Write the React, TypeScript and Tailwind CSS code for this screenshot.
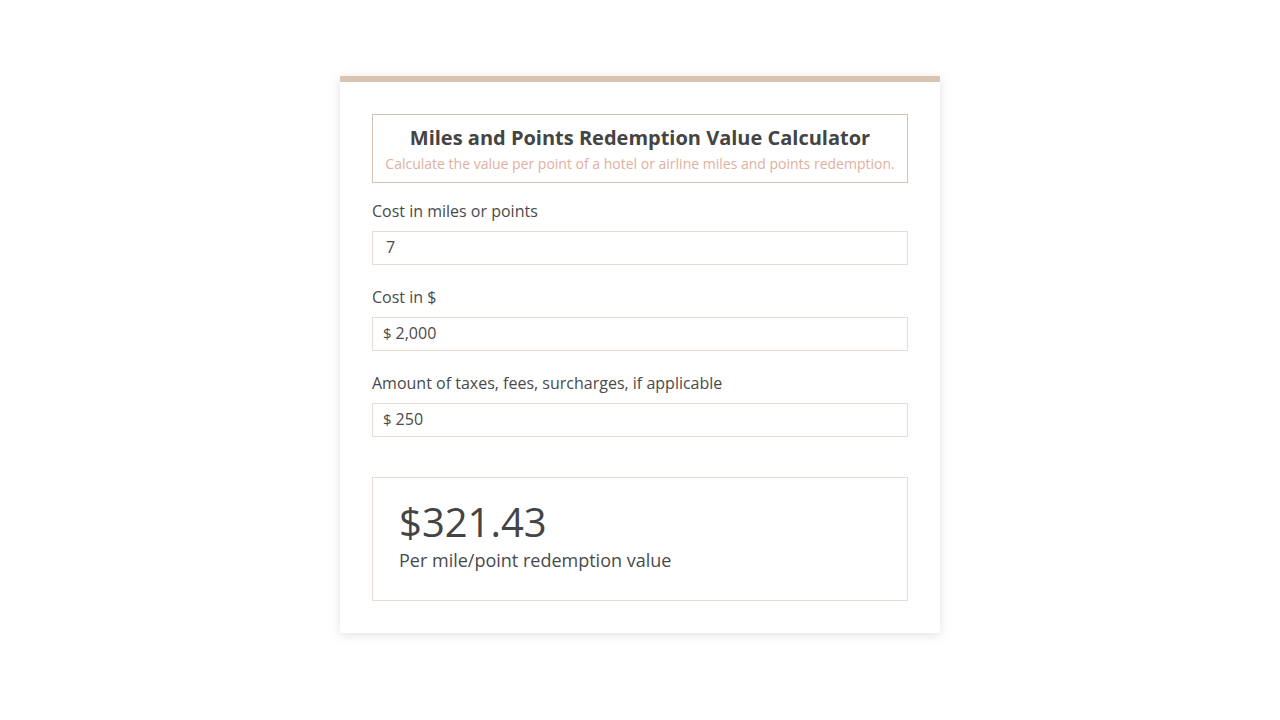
import React, { useState } from 'react';

const fmt = (n: number) =>
    n.toLocaleString('en-US', { minimumFractionDigits: 2, maximumFractionDigits: 2 });

const Field: React.FC<{ label: string; value: string; prefix?: string }> = ({ label, value, prefix }) => (
    <div className="mb-5">
        <label className="block text-[16px] leading-6 text-[#4a4a4a] mb-2">{label}</label>
        <div className="flex items-center h-[34px] border border-[#e8dbd5] bg-white px-[10px] pb-[2px] text-[16px] text-[#4a4a4a]">
            {prefix ? <span className="mr-1 text-[15px]">{prefix}</span> : <span className="w-[3px]" />}
            <span>{value}</span>
        </div>
    </div>
);

export default function App() {
    const [miles] = useState(7);
    const [cost] = useState(2000);
    const [fees] = useState(250);

    // value per point, taxes and fees included
    const value = (cost + fees) / miles;

    return (
        <div className="min-h-screen bg-white pt-[76px] font-['Open_Sans',sans-serif]">
            <div className="mx-auto w-[600px] bg-white border-t-[6px] border-[#d9c4b3] shadow-[0_2px_10px_rgba(0,0,0,0.12)] px-8 pt-8 pb-8">
                {/* Header */}
                <div className="border border-[#d6c3b6] text-center pt-[9px] pb-[8px] mb-4">
                    <h1 className="text-[20px] leading-7 font-bold text-[#444]">Miles and Points Redemption Value Calculator</h1>
                    <p className="mt-[2px] text-[14px] leading-5 text-[#dfb0a0]">
                        Calculate the value per point of a hotel or airline miles and points redemption.
                    </p>
                </div>

                <Field label="Cost in miles or points" value={String(miles)} />
                <Field label="Cost in $" prefix="$" value={cost.toLocaleString('en-US')} />
                <Field label="Amount of taxes, fees, surcharges, if applicable" prefix="$" value={String(fees)} />

                {/* Result */}
                <div className="mt-10 border border-[#e8dbd5] h-[124px] px-[26px] pt-[18px]">
                    <div className="text-[40px] leading-[52px] text-[#444]">${fmt(value)}</div>
                    <div className="text-[18px] leading-6 text-[#4a4a4a]">Per mile/point redemption value</div>
                </div>
            </div>
        </div>
    );
}
